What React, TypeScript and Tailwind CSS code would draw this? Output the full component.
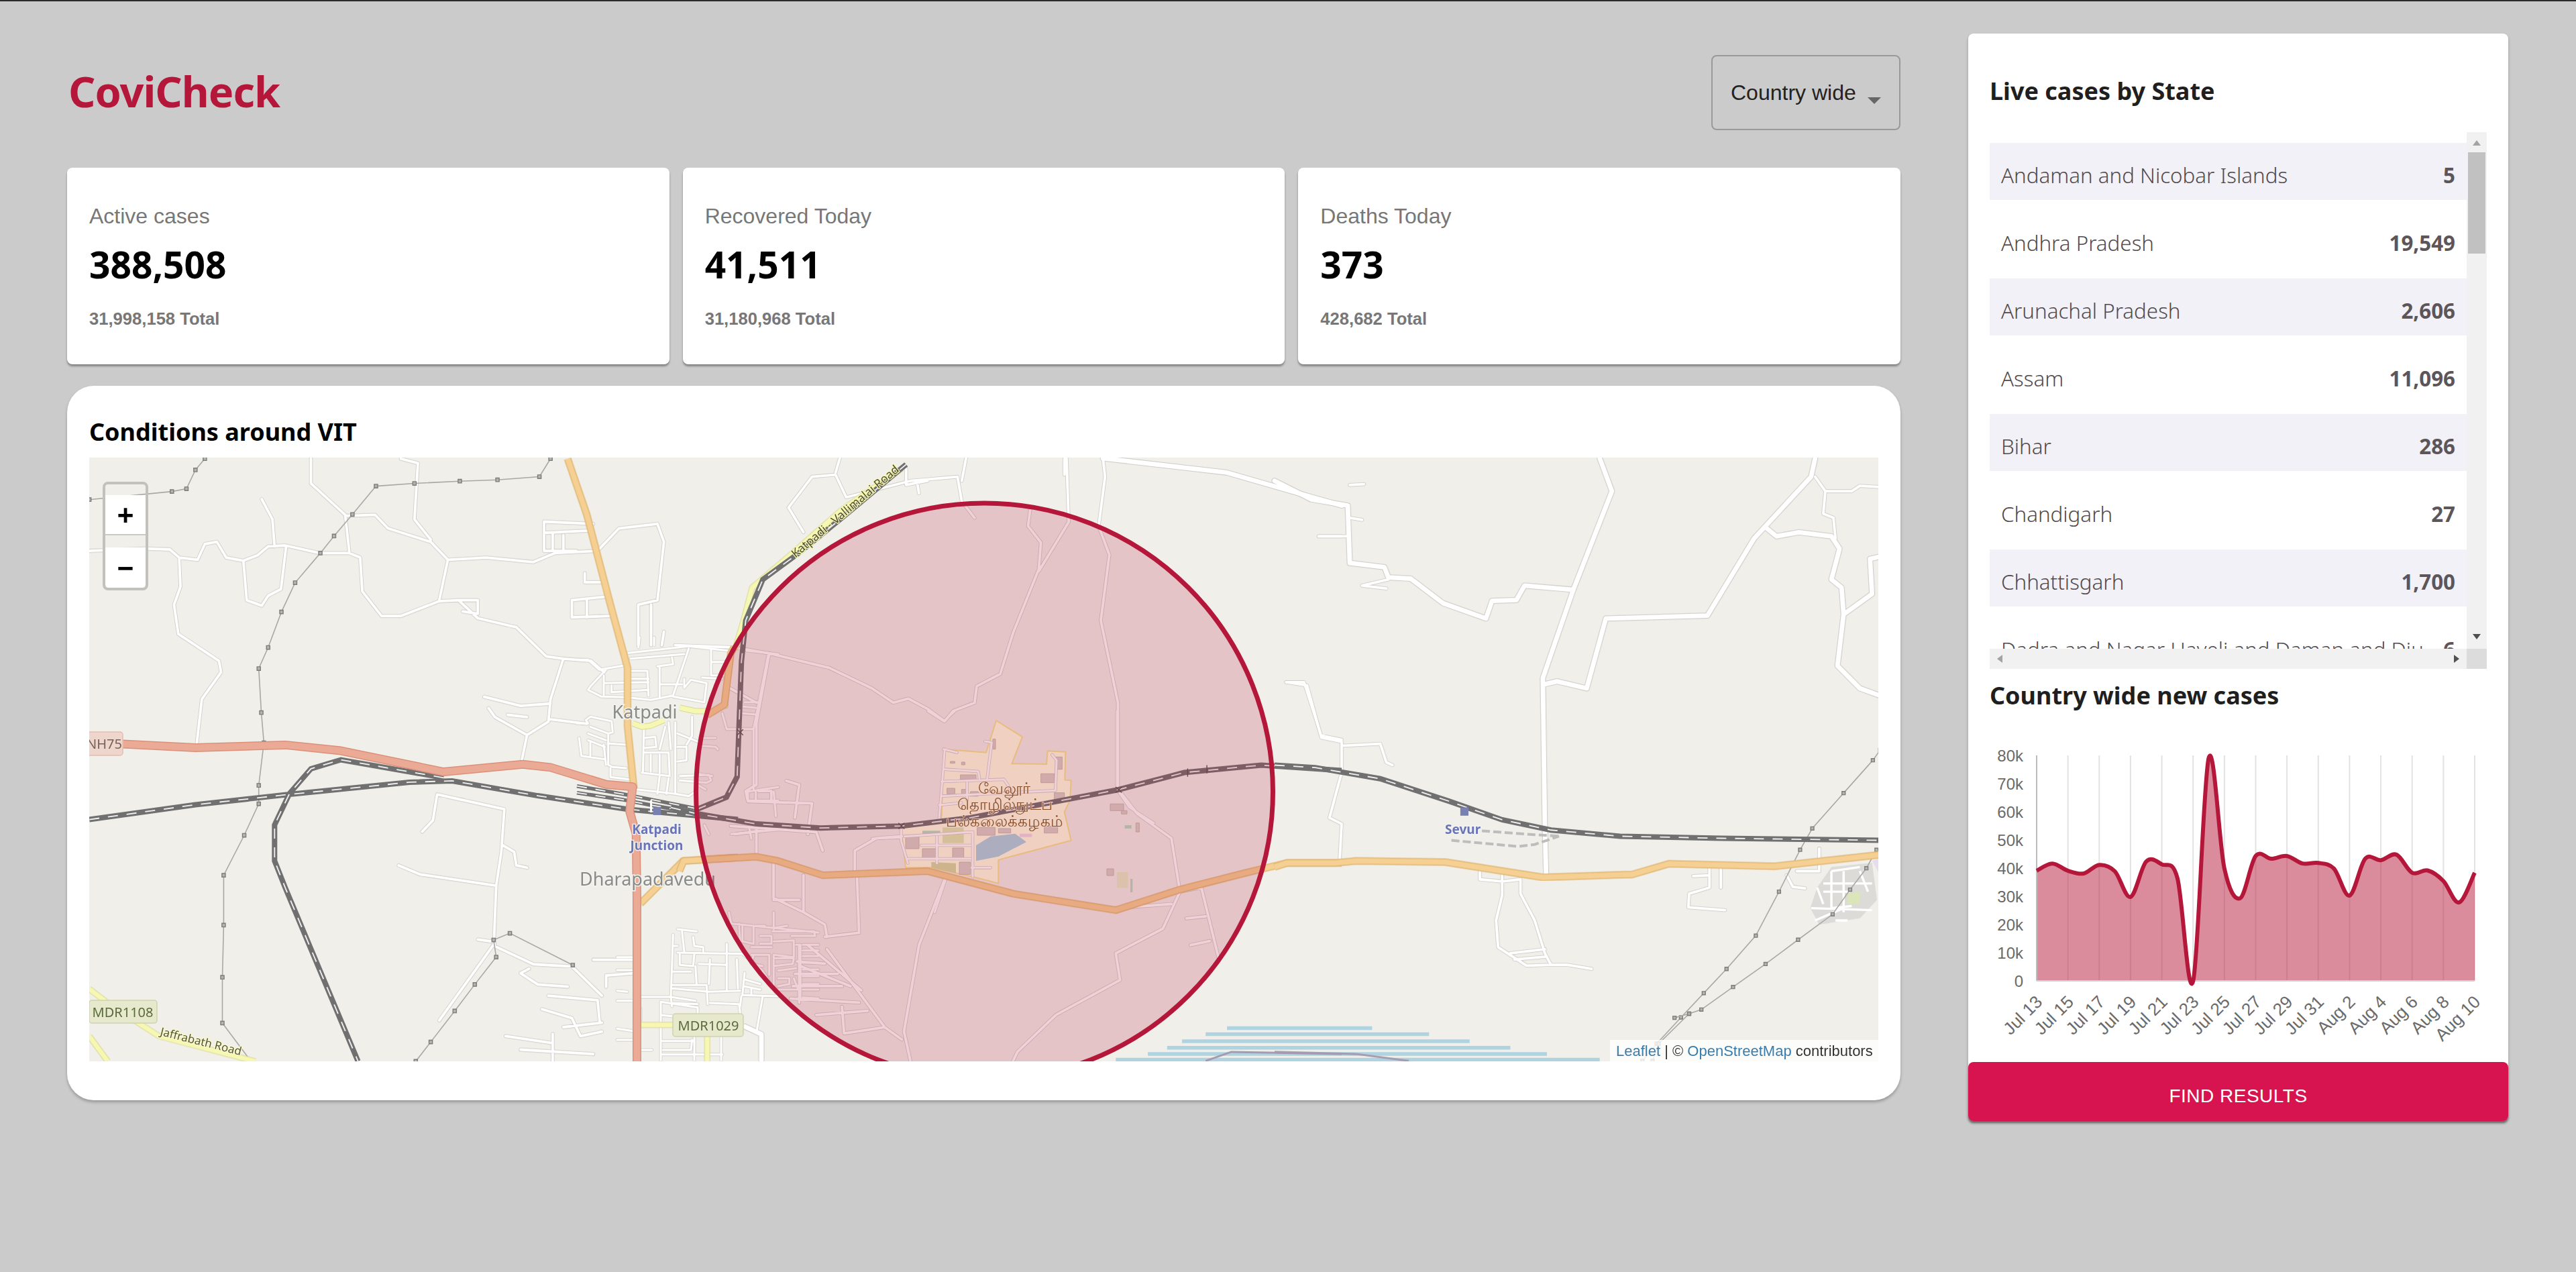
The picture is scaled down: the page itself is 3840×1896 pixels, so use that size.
import React from "react";

type Frame = { tx: number; ty: number; sx: number; sy: number; roads: string; thick?: string };
const tf = (f: { tx: number; ty: number; sx: number; sy: number }) => `translate(${f.tx} ${f.ty}) scale(${f.sx} ${f.sy})`;

const Z4 = { tx: 100, ty: 600, sx: 1 / 1.568, sy: 1 / 1.493 };
const Z5 = { tx: 1000, ty: 680, sx: 1 / 1.568, sy: 1 / 1.633 };
const Z6 = { tx: 1900, ty: 680, sx: 1 / 1.6505, sy: 1 / 1.633 };
const Z7 = { tx: 1300, ty: 1060, sx: 1 / 3, sy: 1 / 3 };
const Z9 = { tx: 860, ty: 950, sx: 1 / 3, sy: 1 / 3 };
const Z10 = { tx: 920, ty: 1360, sx: 1 / 3, sy: 1 / 3 };

const frames: Frame[] = [
  {
    ...Z4,
    roads:
      "M52 330 L180 325 L240 327 L262 345 L305 350 L322 315 L350 310 L372 345 L412 352 L445 340 L470 320 L510 318 L590 335 L660 335 L685 345 L690 420 L735 475 L780 475 L870 442 L915 440 L960 480 L1050 500 L1120 565 L1160 570 L1225 575 L1255 600 M262 345 L265 410 L250 450 L260 515 L355 575 L360 600 L315 660 L303 760 M412 352 L420 440 L455 452 L470 430 L500 415 L512 320 M455 215 L480 260 L485 320 M570 125 L570 180 L650 250 L660 335 M650 252 L720 250 L750 280 L850 310 L890 350 L870 440 M780 125 L820 135 L812 260 L850 305 M890 350 L980 345 L1090 355 L1140 335 L1240 330 L1290 280 L1380 270 L1395 310 L1380 440 L1335 450 L1335 540 M1115 265 L1230 270 M1115 265 L1115 330 L1190 330 M1135 290 L1135 330 M1160 295 L1160 330 M1115 290 L1220 285 M1210 380 L1210 400 L1255 400 M1180 440 L1260 432 M1180 440 L1180 478 L1270 475 M1215 440 L1215 478 M1365 450 L1365 540 M1395 510 L1390 540 M1160 570 L1130 660 L1125 710 L1075 740 L1062 800 M975 655 L1060 675 L1130 670 M985 680 L1000 700 L1075 740 M1130 705 L1215 715 M1030 695 L1075 700 M865 872 L1022 905 L1015 1000 L1003 1075 L998 1195 L1000 1210 L1090 1250 L1180 1255 L1250 1320 M865 872 L855 930 L830 955 M1018 985 L1045 1000 L1050 1030 L1075 1035 M775 1030 L825 1050 L1003 1075 M998 1205 L870 1375 M915 440 L960 440 L960 470 L925 465 M1080 1260 L1060 1270 L1100 1295 L1170 1300 M1125 1320 L1240 1330 L1245 1380 M1110 1350 L1180 1370 L1200 1410 L1250 1400 M1025 1410 L1130 1425 M1135 1405 L1135 1466 M1060 1440 L1230 1450 M1230 1240 L1325 1240 M1260 1275 L1325 1270 M1260 1275 L1260 1300 M960 1195 L998 1200 M1160 1390 L1250 1380",
  },
  {
    ...Z5,
    roads:
      "M840 130 L835 170 L865 210 L860 275 L800 430 L770 530 L715 560 L710 600 L660 620 L640 645 L600 615 L555 590 L520 600 L470 565 L400 530 L370 515 L230 480 L175 470 L140 465 L10 460 M925 5 L930 160 L860 280 M1010 5 L1015 50 L1000 170 L1025 240 L1005 400 L1045 600 L1045 810 L1090 870 L1170 930 L1190 1060 L1150 1150 L1040 1210 L1050 1275 L900 1360 L810 1450 L800 1472 M1190 1060 L1240 1050 L1280 1220 M1170 1090 L1040 1100 M1205 1125 L1250 1120 M1215 1190 L1260 1180 M230 480 L200 650 L200 800 L175 815 L180 840 L330 845 L320 920 M270 790 L300 800 L290 880 M205 815 L235 815 L235 840 M640 1030 L580 1190 L545 1400 L560 1472 M360 1170 L440 1160 L435 1020 M365 1200 L500 1390 L540 1420 M400 1340 L405 1405 L500 1390 M300 1240 L420 1290 M310 1110 L360 1140 L365 1170 M240 985 L240 1075 L310 1110 L310 1020 M240 1080 L300 1080 M140 900 L340 915 L355 960 M150 920 L260 905 M200 900 L200 970 M430 1020 L430 960 L480 930 L540 925 M1438 550 L1480 550 L1520 680 L1568 690 M320 1190 L445 1300 M295 1230 L360 1235 M290 1260 L390 1260 M285 1290 L400 1290 M280 1320 L440 1330 M340 1360 L460 1350 M300 1190 L300 1330 M1515 195 L1568 195 M275 125 L330 50 L385 45 L410 100 L560 60 L670 50 L680 110 L710 150 M275 125 L310 185 M680 60 L690 5 M920 5 L920 45 M395 5 L385 40 M550 30 L550 70 L600 60 M575 60 L580 90 M130 610 L130 560 L200 600",
    thick: "M1010 5 L1300 40 L1500 100 L1568 120",
  },
  {
    ...Z6,
    roads:
      "M185 70 L220 68 M185 150 L215 155 M108 195 L180 195 M215 315 L275 322 M215 315 L280 300 M30 550 L80 558 L115 685 L165 695 L165 770 L135 880 L165 895 L160 985 M165 705 L260 700 L275 745 L290 752 M505 1010 L505 1030 L560 1035 L605 1030 L605 1065 L640 1130 L665 1210 L680 1238 L720 1238 L780 1248 M560 1020 L560 1068 L545 1130 L550 1195 L620 1240 L680 1238 M580 1210 L665 1200 M590 1225 L670 1218 M1070 1000 L1070 1050 L1020 1065 L1018 1098 L1108 1105 M1098 1000 L1098 1050 M1030 1022 L1070 1020 M1340 955 L1340 1010 L1285 1010 M1260 1020 L1275 1048 L1305 1052 M1355 85 L1420 85 L1440 72 L1487 75 M1330 50 L1355 85 L1350 140 L1375 150 L1380 200",
    thick:
      "M0 60 L90 105 L180 120 L185 260 L270 270 L280 295 L335 298 L415 358 L520 395 L535 352 L595 350 L615 315 L735 325 L660 540 L665 900 L668 1015 M800 5 L830 85 L735 325 M665 555 L695 548 L768 565 L815 395 L1065 388 L1180 200 L1320 50 L1330 5 M1210 175 L1235 195 L1290 185 L1370 195 L1390 225 L1370 300 L1395 320 L1400 385 L1385 510 L1440 565 L1487 582 M1400 385 L1470 335 L1465 250 L1487 245",
  },
  {
    ...Z9,
    roads:
      "M0 100 L50 100 L100 145 L215 125 M130 145 L60 220 L50 235 L110 265 L220 268 M120 170 L120 260 M120 205 L320 200 M155 215 L155 245 L320 235 M240 150 L315 150 L320 260 M240 185 L320 185 M230 70 L500 40 L680 60 M240 95 L480 75 M500 50 L430 260 L330 280 L220 268 M360 130 L430 120 L425 90 M370 130 L370 270 M375 210 L470 210 M480 185 L480 225 L510 190 L580 205 L570 290 L430 265 M600 55 L600 170 L670 170 M600 110 L680 110 M650 185 L560 180 M280 0 L275 45 M345 0 L345 35 M385 0 L380 35 M0 385 L50 385 L40 370 L60 355 L155 375 L160 425 L140 430 L60 400 M50 430 L130 460 M50 460 L125 490 M10 450 L20 530 L125 545 M60 470 L60 530 M120 480 L130 570 M140 430 L140 570 L160 580 L220 585 M145 475 L220 480 M150 585 L150 625 L235 635 M300 400 L295 605 M300 450 L350 445 L355 490 L300 495 M300 515 L410 515 L415 620 L290 605 M330 525 L330 600 M370 525 L370 605 M395 400 L370 500 M410 380 L420 500 M440 380 L440 700 M450 490 L490 490 L490 550 L450 555 M450 430 L550 470 M515 355 L515 440 L490 480 M555 450 L620 450 M555 485 L620 490 L630 500 M460 620 L590 615 L600 640 L580 650 L460 640 M370 620 L360 700 M410 630 L400 700 M270 680 L440 700 L500 710 L530 690 M650 340 L670 410 L790 410 M750 290 L810 290 M745 310 L800 315 M740 340 L800 345 M855 80 L790 410 L790 680 M760 60 L900 75 M760 690 L900 670 M765 690 L765 730 L900 730 M800 690 L800 730 M880 690 L890 800 M540 610 L605 620 M540 660 L575 680 M570 840 L590 880 M690 880 L900 860 M770 850 L780 900",
  },
  {
    ...Z10,
    roads:
      "M250 100 L240 380 L245 420 M270 75 L355 85 M290 85 L300 175 M255 150 L270 150 M340 110 L345 150 L385 155 L385 175 M270 180 L560 185 L650 260 L720 375 M280 185 L280 235 L340 240 L345 185 M245 265 L330 265 M245 325 L400 325 L405 410 M350 240 L355 320 M415 210 L410 320 M365 230 L490 235 M490 140 L490 350 M535 210 L540 340 M570 270 L560 370 L720 375 M570 300 L640 320 M565 330 L640 345 M600 340 L600 370 M245 340 L410 355 L550 350 M100 378 L240 378 L350 395 M245 405 L360 410 M195 400 L195 660 M195 400 L360 425 L360 450 M415 405 L545 410 L550 450 M555 375 L550 420 M650 380 L625 525 M0 200 L70 200 M0 258 L70 258 M0 350 L45 355 M0 395 L70 395 M0 520 L70 530 M105 430 L105 480 M0 570 L70 570 M110 615 L155 615 M200 460 L255 465 M200 575 L340 575 M205 615 L330 615 L335 570 M195 635 L470 635 M465 555 L465 660 M345 555 L345 660 M500 0 L510 50 L900 90 M545 50 L550 130 M560 55 L560 130 L610 140 L610 60 L660 60 M640 105 L690 105 L690 140 L640 140 M600 155 L690 155 M700 0 L700 75 M700 70 L760 60 M700 130 L790 125 L790 200 L700 190 L700 340 M695 85 L880 85 L885 105 L780 105 M800 145 L820 145 L820 390 M830 145 L900 145 M830 170 L900 170 M830 195 L900 195 M830 225 L900 225 M830 255 L900 255 M830 285 L900 285 M830 320 L900 320 M830 345 L900 345 M830 380 L900 385 M600 190 L680 190 L680 280 M610 190 L600 230 L650 240 M700 205 L790 205 L785 230 L700 240 M720 260 L800 250 M720 295 L770 295 L770 320 L720 330 M790 295 L810 345 L720 345",
    thick: "M570 510 L645 545 L645 660",
  },
  {
    ...Z7,
    roads:
      "M320 170 L380 185 M325 170 L315 300 L300 480 M325 260 L475 270 L480 300 M310 315 L590 305 L620 350 L620 380 M310 380 L820 355 L825 220 L805 195 M505 135 L535 140 L515 300 M425 320 L425 400 M300 420 L400 410 M130 520 L130 580 L160 680 M0 570 L130 565 M145 560 L450 540 L450 740 M290 560 L290 680 M220 600 L440 600 M160 660 L440 660 M445 700 L530 700 M1095 0 L1095 350 L1150 430 L1260 500 M250 0 L320 45 L370 0 M330 750 L280 900",
  },
];

const powerLines: { f: typeof Z4; pts: number[][] }[] = [
  { f: Z4, pts: [[52, 216], [245, 198], [279, 192], [300, 150], [322, 125]] },
  { f: Z4, pts: [[1130, 125], [1104, 165], [1006, 172], [918, 175], [812, 180], [722, 186], [667, 249], [624, 297], [592, 335], [533, 401], [501, 466], [470, 545], [448, 592], [454, 690], [460, 757], [448, 852], [448, 893], [414, 963], [366, 1052], [366, 1163], [363, 1279], [363, 1381], [430, 1466]] },
  { f: Z4, pts: [[1182, 1252], [1035, 1181], [997, 1196], [1003, 1234], [953, 1295], [906, 1354], [850, 1423], [815, 1466]] },
  { f: Z6, pts: [[1490, 715], [1472, 740], [1400, 820], [1323, 906], [1293, 958], [1241, 1060], [1184, 1167], [1112, 1248], [1056, 1307], [1000, 1366], [940, 1430], [905, 1472]] },
  { f: Z6, pts: [[1481, 958], [1456, 1003], [1416, 1055], [1373, 1115], [1288, 1177], [1208, 1236], [1128, 1292], [1050, 1347], [1020, 1357], [984, 1367]] },
  { f: Z6, pts: [[1020, 1357], [945, 1430], [930, 1472]] },
];

const buildings: number[][] = [
  [755, 280, 60, 40], [820, 205, 30, 55], [815, 365, 45, 40], [395, 285, 70, 20], [335, 345, 35, 25], [400, 350, 25, 20], [440, 360, 35, 20], [470, 520, 80, 35], [565, 525, 55, 20], [150, 555, 60, 60], [225, 615, 65, 40], [360, 612, 50, 46], [390, 675, 50, 55], [1065, 415, 60, 30], [1050, 705, 30, 30], [1180, 500, 15, 40], [540, 125, 12, 45], [350, 225, 20, 8], [400, 228, 15, 12], [770, 515, 60, 30], [1115, 445, 25, 15],
];

const stateRows: [string, string][] = [
  ["Andaman and Nicobar Islands", "5"],
  ["Andhra Pradesh", "19,549"],
  ["Arunachal Pradesh", "2,606"],
  ["Assam", "11,096"],
  ["Bihar", "286"],
  ["Chandigarh", "27"],
  ["Chhattisgarh", "1,700"],
  ["Dadra and Nagar Haveli and Daman and Diu", "6"],
];

const chartY = [598, 572, 598, 608, 577, 600, 692, 565, 575, 625, 995, 192, 590, 697, 545, 555, 545, 572, 570, 590, 687, 555, 560, 540, 605, 597, 635, 712, 605];
const px = (i: number) => 3036 + (i * 653) / 28;
const py = (y: number) => 1050 + y / 2.412;
const pts = chartY.map((y, i) => [px(i), py(y)]);
const linePath = pts.reduce((acc, p, i) => {
  if (i === 0) return `M${p[0]} ${p[1]}`;
  const p0 = pts[Math.max(i - 2, 0)];
  const p1 = pts[i - 1];
  const p3 = pts[Math.min(i + 1, pts.length - 1)];
  const c1x = p1[0] + (p[0] - p0[0]) / 6;
  const c1y = p1[1] + (p[1] - p0[1]) / 6;
  const c2x = p[0] - (p3[0] - p1[0]) / 6;
  const c2y = p[1] - (p3[1] - p1[1]) / 6;
  return `${acc} C${c1x} ${c1y} ${c2x} ${c2y} ${p[0]} ${p[1]}`;
}, "");
const xLabels = ["Jul 13", "Jul 15", "Jul 17", "Jul 19", "Jul 21", "Jul 23", "Jul 25", "Jul 27", "Jul 29", "Jul 31", "Aug 2", "Aug 4", "Aug 6", "Aug 8", "Aug 10"];
const yLabels = ["0", "10k", "20k", "30k", "40k", "50k", "60k", "70k", "80k"];

function MapArt() {
  const ns = { vectorEffect: "non-scaling-stroke" as const, fill: "none" };
  return (
    <svg viewBox="133 682 2667 900" className="block w-[2667px] h-[900px]">
      <defs>
        <filter id="soft" x="0" y="0" width="1" height="1">
          <feGaussianBlur stdDeviation="0.6" />
        </filter>
      </defs>
      <rect x="133" y="682" width="2667" height="900" fill="#f0efe9" />
      <g filter="url(#soft)">
        <g transform={tf(Z6)} stroke="#afd3e0" strokeWidth="5.5" fill="none">
          {[[1392, 240], [1407, 380], [1424, 480], [1440, 580], [1455, 670], [1469, 800]].map(([y, x]) => (
            <path key={y} d={`M-400 ${y} L${x} ${y}`} vectorEffect="non-scaling-stroke" />
          ))}
        </g>
        <g transform={tf(Z5)} stroke="#f0efe9" fill="none">
          <path d="M1000 1392 L1300 1392" vectorEffect="non-scaling-stroke" strokeWidth="8" />
          <path d="M1000 1407 L1250 1407" vectorEffect="non-scaling-stroke" strokeWidth="8" />
          <path d="M1000 1424 L1195 1424" vectorEffect="non-scaling-stroke" strokeWidth="8" />
          <path d="M1000 1440 L1160 1440" vectorEffect="non-scaling-stroke" strokeWidth="8" />
          <path d="M1000 1455 L1115 1455" vectorEffect="non-scaling-stroke" strokeWidth="8" />
          <path d="M1000 1469 L1040 1469" vectorEffect="non-scaling-stroke" strokeWidth="8" />
          <path d="M1250 1472 L1310 1450 L1568 1455" stroke="#a59ab0" strokeWidth="3" vectorEffect="non-scaling-stroke" />
        </g>
        <g transform={tf(Z6)}>
          <path d="M0 1450 L200 1455 L330 1472" stroke="#a59ab0" strokeWidth="3" {...ns} />
          <path d="M1335 1050 L1370 1000 L1470 990 L1482 1080 L1440 1125 L1340 1140 L1318 1100 Z" fill="#dcdbd7" stroke="none" />
          <path d="M1470 985 L1487 980 L1487 1015 Z" fill="#e6dced" stroke="none" />
          <path d="M1410 1065 L1440 1060 L1440 1090 L1410 1090 Z" fill="#dbe6b8" stroke="none" />
        </g>
        <g transform={tf(Z7)}>
          <path d="M555 42 L672 115 L625 235 L780 237 L785 178 L865 182 L862 308 L890 310 L885 400 L860 450 L890 578 L565 665 L565 770 L450 740 L265 700 L150 700 L130 520 L310 490 L320 170 L510 185 Z" fill="#ffffe3" stroke="#f6e48f" strokeWidth="2" vectorEffect="non-scaling-stroke" />
          <path d="M465 600 L530 560 L640 548 L690 585 L565 650 L465 670 Z" fill="#aad3df" />
          <path d="M265 675 L375 680 L375 725 L265 700 Z" fill="#d4dba0" />
          <rect x="315" y="520" width="95" height="70" fill="#dce9b0" />
          <rect x="1095" y="720" width="50" height="70" fill="#e8edc7" />
          <rect x="1155" y="750" width="10" height="60" fill="#b4dcc0" />
          <rect x="225" y="535" width="80" height="20" fill="#b4dcc0" />
          <rect x="1130" y="510" width="30" height="15" fill="#b4dcc0" />
          <rect x="660" y="548" width="55" height="15" fill="#f0d9e8" />
          {buildings.map(([x, y, w, h], i) => (
            <rect key={i} x={x} y={y} width={w} height={h} fill="#d9d0c9" stroke="#c5b8ae" strokeWidth="1" vectorEffect="non-scaling-stroke" />
          ))}
        </g>
        {frames.map((f, i) => (
          <g key={i} transform={tf(f)}>
            <path d={f.roads} stroke="#cfcec9" strokeWidth={i < 3 ? 5.6 : 4.6} strokeLinejoin="round" strokeLinecap="round" {...ns} />
            {f.thick && <path d={f.thick} stroke="#cfcec9" strokeWidth="9" strokeLinejoin="round" strokeLinecap="round" {...ns} />}
          </g>
        ))}
        {frames.map((f, i) => (
          <g key={i} transform={tf(f)}>
            <path d={f.roads} stroke="#ffffff" strokeWidth={i < 3 ? 3.8 : 3} strokeLinejoin="round" strokeLinecap="round" {...ns} />
            {f.thick && <path d={f.thick} stroke="#ffffff" strokeWidth="6.8" strokeLinejoin="round" strokeLinecap="round" {...ns} />}
          </g>
        ))}
        <g transform={tf(Z6)}>
          <path d="M1350 1040 L1470 1040 M1370 1010 L1370 1100 L1420 1095 M1400 1010 L1400 1110 M1320 1100 L1470 1105 M1330 1130 L1400 1100 M1440 1010 L1460 1060 M1350 1060 L1415 1060 M1380 1130 L1410 1130 M1335 1050 L1350 1090 M1370 1010 L1440 1000" stroke="#ffffff" strokeWidth="3.4" strokeLinejoin="round" {...ns} />
        </g>
        {powerLines.map((l, i) => (
          <g key={i} transform={tf(l.f)}>
            <path d={"M" + l.pts.map((p) => p.join(" ")).join(" L")} stroke="#a9a8a4" strokeWidth="1.6" {...ns} />
            {l.pts.map((p, j) => (
              <rect key={j} x={p[0] - 4} y={p[1] - 4} width="8" height="8" fill="#b5b4b0" stroke="#7c7c78" strokeWidth="1.4" vectorEffect="non-scaling-stroke" />
            ))}
          </g>
        ))}
        {[
          { f: Z4, d: "M52 1305 L100 1340 L215 1410 L440 1466 M52 1410 L95 1466 M1340 1385 L1420 1385" },
          { f: Z9, d: "M250 385 L290 400 L330 395 L390 370 M460 315 L530 330 L580 330" },
          { f: Z5, d: "M540 30 L400 130 L280 240 L190 320 L170 400 L150 470 M85 1480 L85 1400" },
        ].map((s, i) => (
          <g key={i} transform={tf(s.f)}>
            <path d={s.d} stroke="#d8d896" strokeWidth="9" {...ns} strokeLinejoin="round" />
            <path d={s.d} stroke="#f7f7b4" strokeWidth="7" {...ns} strokeLinejoin="round" />
          </g>
        ))}
        {[
          { f: Z4, d: "M52 928 L300 895 L520 872 L800 845 L900 842 L1100 875 L1310 905 L1568 928 M880 835 L640 795 L570 815 L520 870 L485 940 L485 1020 L510 1080 L680 1466", w: 8 },
          { f: Z9, d: "M0 665 L200 700 L330 725 L530 765 M0 695 L200 725 L330 750 L530 785", w: 5.5 },
          { f: Z5, d: "M0 855 L60 870 L200 895 L350 905 L540 900 L700 880 L1045 812 L1200 770 L1380 752 L1568 765 M60 860 L130 830 L155 780 L165 500 L175 400 L215 300 L300 235 L400 150 L550 20", w: 8 },
          { f: Z6, d: "M0 752 L100 758 L260 785 L430 840 L560 885 L680 910 L850 925 L1100 930 L1490 935", w: 8 },
        ].map((r, i) => (
          <g key={i} transform={tf(r.f)}>
            <path d={r.d} stroke="#707070" strokeWidth={r.w} {...ns} />
            <path d={r.d} stroke="#f2f2f2" strokeWidth="1.8" strokeDasharray="15 13" {...ns} />
          </g>
        ))}
        <g transform={tf(Z6)}>
          <path d="M510 912 L620 920 L700 925 M435 935 L600 950 L640 945 L700 925" stroke="#bdbdbd" strokeWidth="4" strokeDasharray="12 5" {...ns} />
          <rect x="457" y="855" width="20" height="20" fill="#7981b1" />
        </g>
        <g transform={tf(Z5)} stroke="#5a4f50" strokeWidth="1.4" fill="none">
          <path d="M532 893 L546 907 M546 893 L532 907 M1040 805 L1054 819 M1054 805 L1040 819 M155 665 L169 679 M169 665 L155 679 M1208 760 L1208 780 M1253 752 L1253 772" vectorEffect="non-scaling-stroke" />
        </g>
        {[
          { f: Z4, d: "M1170 125 L1215 250 L1270 450 L1310 590 L1310 720 L1325 860 M1340 1115 L1440 1020 L1568 1012" },
          { f: Z5, d: "M20 1010 L30 985 L200 975 L250 985 L355 1020 L600 1010 L800 1065 L1040 1105 L1190 1055 L1340 1015 L1440 990 L1568 990 M85 630 L125 605 L140 480 L148 465" },
          { f: Z6, d: "M0 1000 L30 990 L150 990 L200 985 L420 988 L660 1025 L880 1018 L970 992 L1230 998 L1490 970" },
        ].map((r, i) => (
          <g key={i} transform={tf(r.f)}>
            <path d={r.d} stroke="#dfb673" strokeWidth="11" strokeLinejoin="round" {...ns} />
            <path d={r.d} stroke="#f6cf92" strokeWidth="8" strokeLinejoin="round" {...ns} />
          </g>
        ))}
        <g transform={tf(Z4)}>
          <path d="M130 760 L300 768 L510 762 L640 775 L880 822 L1065 805 L1130 812 L1260 850 L1322 855 L1315 910 L1330 960 L1332 1100 L1332 1466" stroke="#dc9079" strokeWidth="13" strokeLinejoin="round" {...ns} />
          <path d="M130 760 L300 768 L510 762 L640 775 L880 822 L1065 805 L1130 812 L1260 850 L1322 855 L1315 910 L1330 960 L1332 1100 L1332 1466" stroke="#ebaa96" strokeWidth="10" strokeLinejoin="round" {...ns} />
          <rect x="1370" y="900" width="18" height="18" fill="#7981b1" />
          <path d="M1365 885 L1365 912" stroke="#fff" strokeWidth="3" {...ns} />
        </g>
        <g fontFamily="'Noto Sans', sans-serif">
          <rect x="120" y="1091" width="63" height="35" rx="4" fill="#efd6cc" stroke="#e3bdae" strokeWidth="1.5" />
          <text x="129" y="1116" fontSize="20" fill="#75625a">NH75</text>
          <rect x="133" y="1491" width="101" height="34" rx="4" fill="#e7e9cd" stroke="#cfd2ae" strokeWidth="1.5" />
          <text x="183" y="1516" fontSize="20" fill="#5a6a3c" textAnchor="middle">MDR1108</text>
          <rect x="1003" y="1511" width="105" height="34" rx="4" fill="#e7e9cd" stroke="#cfd2ae" strokeWidth="1.5" />
          <text x="1056" y="1536" fontSize="20" fill="#5a6a3c" textAnchor="middle">MDR1029</text>
          <text x="961" y="1071" fontSize="27" fill="#8a8a88" stroke="#f3f3ef" strokeWidth="3" paintOrder="stroke" textAnchor="middle">Katpadi</text>
          <text x="864" y="1320" fontSize="27" fill="#8a8a88" stroke="#f3f3ef" strokeWidth="3" paintOrder="stroke">Dharapadavedu</text>
          <text x="979" y="1243" fontSize="19" fontWeight="700" fill="#6b74b8" stroke="#f3f3ef" strokeWidth="2.5" paintOrder="stroke" textAnchor="middle">Katpadi</text>
          <text x="979" y="1267" fontSize="19" fontWeight="700" fill="#6b74b8" stroke="#f3f3ef" strokeWidth="2.5" paintOrder="stroke" textAnchor="middle">Junction</text>
          <text x="2154" y="1243" fontSize="19" fontWeight="700" fill="#6b74b8" stroke="#f3f3ef" strokeWidth="2.5" paintOrder="stroke">Sevur</text>
          <text transform="translate(238 1543) rotate(14)" fontSize="17" fill="#55553c" stroke="#fafac8" strokeWidth="2.5" paintOrder="stroke">Jaffrabath Road</text>
          <text transform="translate(1186 832) rotate(-40)" fontSize="17.5" fill="#4c4c30" stroke="#f7f7b4" strokeWidth="2.5" paintOrder="stroke">Katpadi - Vallimalai Road</text>
          <g fontSize="23" fill="#7c5c28" stroke="#ffffe3" strokeWidth="1.5" paintOrder="stroke" textAnchor="middle">
            <text x="1497" y="1183">வேலூர்</text>
            <text x="1498" y="1207">தொழில்நுட்ப</text>
            <text x="1497" y="1232">பல்கலைக்கழகம்</text>
          </g>
        </g>
      </g>
      <circle cx="1467.5" cy="1180" r="430" fill="#b5173a" fillOpacity="0.2" stroke="#b5173a" strokeWidth="7" />
    </svg>
  );
}

function Chart() {
  return (
    <svg viewBox="2966 1100 741 482" className="block w-[741px] h-[482px]" fontFamily="'Liberation Sans', sans-serif">
      {xLabels.map((_, i) => (
        <line key={i} x1={px(i * 2)} x2={px(i * 2)} y1="1126" y2="1462" stroke="#e2e2e2" strokeWidth="2" />
      ))}
      <path d={`${linePath} L3689 1462 L3036 1462 Z`} fill="#b5173a" fillOpacity="0.5" />
      <line x1="3036" x2="3036" y1="1126" y2="1462" stroke="#bdbdbd" strokeWidth="2" />
      <line x1="3036" x2="3689" y1="1462" y2="1462" stroke="#d0d0d0" strokeWidth="2" />
      <path d={linePath} fill="none" stroke="#b5173a" strokeWidth="6" />
      {yLabels.map((t, i) => (
        <text key={t} x="3016" y={1462 - i * 41.95 + 9} textAnchor="end" fontSize="24" fill="#6a6a6a">{t}</text>
      ))}
      {xLabels.map((t, i) => (
        <text key={t} transform={`translate(${px(i * 2) + 10} ${1495}) rotate(-45)`} textAnchor="end" fontSize="26" fill="#6a6a6a">{t}</text>
      ))}
    </svg>
  );
}

const Tri = ({ d, c }: { d: string; c: string }) => (
  <svg viewBox="0 0 12 12" className="w-[12px] h-[12px] block">
    <path d={d} fill={c} />
  </svg>
);

function StatCard({ label, value, total }: { label: string; value: string; total: string }) {
  return (
    <div className="bg-white rounded-lg shadow-[0_3px_3px_rgba(0,0,0,0.35)] h-[293px] px-[33px] pt-[52px]">
      <div className="font-['Liberation_Sans',sans-serif] text-[32px] leading-[40px] text-[#777777]">{label}</div>
      <div className="font-['Noto_Sans',sans-serif] font-bold text-[55px] leading-[60px] mt-[22px] text-black">{value}</div>
      <div className="font-['Liberation_Sans',sans-serif] font-bold text-[25.6px] leading-[30px] mt-[36px] text-[#777777]">{total}</div>
    </div>
  );
}

export default function App() {
  return (
    <div className="w-[3840px] h-[1896px] bg-[#cbcbcb] border-t-2 border-[#2b2b2b] flex pl-[100px] pt-[48px] gap-[101px] overflow-hidden">
      <div className="w-[2733px] shrink-0">
        <div className="h-[200px] flex justify-between items-start">
          <h1 className="font-['Noto_Sans',sans-serif] font-bold text-[63px] leading-[80px] mt-[46px] ml-[2px] text-[#b5173a] tracking-[-1px]">CoviCheck</h1>
          <div className="mt-[32px] w-[282px] h-[112px] border-2 border-[#999999] rounded-lg flex items-center pl-[27px] gap-[17px] font-['Liberation_Sans',sans-serif] text-[32px] text-[#222222]">
            <span>Country wide</span>
            <svg viewBox="0 0 20 10" className="w-[20px] h-[10px] mt-[24px]">
              <path d="M0 0 L20 0 L10 10 Z" fill="#666666" />
            </svg>
          </div>
        </div>
        <div className="grid grid-cols-3 gap-[20px]">
          <StatCard label="Active cases" value="388,508" total="31,998,158 Total" />
          <StatCard label="Recovered Today" value="41,511" total="31,180,968 Total" />
          <StatCard label="Deaths Today" value="373" total="428,682 Total" />
        </div>
        <div className="mt-[32px] bg-white rounded-[40px] shadow-[0_3px_4px_rgba(0,0,0,0.25)] h-[1065px] px-[33px]">
          <div className="h-[107px] pt-[30px] flex items-center font-['Noto_Sans',sans-serif] font-bold text-[36px] text-black">Conditions around VIT</div>
          <div className="relative w-[2667px] h-[900px] overflow-hidden">
            <MapArt />
            <div className="absolute left-[20px] top-[36px] w-[68px] h-[162px] border-4 border-[#c2c1bb] rounded-lg flex flex-col font-['Noto_Sans',sans-serif] text-black">
              <div className="mt-[16px] h-[60px] bg-white border-b-2 border-[#c9c9c5] flex items-center justify-center text-[44px] font-bold leading-none">+</div>
              <div className="mt-[18px] h-[60px] bg-white rounded-b-md flex items-center justify-center text-[44px] font-bold leading-none">−</div>
            </div>
            <div className="absolute right-0 bottom-0 h-[32px] w-[400px] bg-white/80 flex items-center pl-[9px] font-['Liberation_Sans',sans-serif] text-[22px] text-[#333333]">
              <span className="text-[#3a7cab]">Leaflet</span>
              <span className="whitespace-pre"> | © </span>
              <span className="text-[#3a7cab]">OpenStreetMap</span>
              <span className="whitespace-pre"> contributors</span>
            </div>
          </div>
        </div>
      </div>
      <div className="w-[805px] h-[1621px] shrink-0 bg-white rounded-lg shadow-[0_3px_4px_rgba(0,0,0,0.25)] flex flex-col">
        <div className="flex-1 pl-[32px] pr-[31px]">
          <div className="h-[147px] pt-[24px] flex items-center font-['Noto_Sans',sans-serif] font-bold text-[36px] text-[#1f1f1f]">Live cases by State</div>
          <div className="grid grid-cols-[711px_30px] grid-rows-[770px_30px] w-[741px] h-[800px]">
            <div className="overflow-hidden pt-[16px]">
              {stateRows.map(([n, v], i) => (
                <div key={n} className={`h-[84.5px] mb-[16.5px] pt-[13px] px-[17px] flex items-center justify-between font-['Noto_Sans',sans-serif] text-[31.3px] text-[#524a4c] ${i % 2 === 0 ? "bg-[#f2f1f7]" : ""}`}>
                  <span className="font-light whitespace-nowrap">{n}</span>
                  <span className="font-bold text-[#5d5557]">{v}</span>
                </div>
              ))}
            </div>
            <div className="bg-[#f1f1f1] flex flex-col items-center pt-[10px] pb-[12px]">
              <Tri d="M6 2 L12 10 L0 10 Z" c="#a3a3a3" />
              <div className="mt-[8px] w-[26px] h-[151px] bg-[#c1c1c1]" />
              <div className="mt-auto">
                <Tri d="M0 2 L12 2 L6 10 Z" c="#505050" />
              </div>
            </div>
            <div className="bg-[#f1f1f1] flex items-center justify-between pl-[9px] pr-[9px]">
              <Tri d="M2 6 L10 0 L10 12 Z" c="#a3a3a3" />
              <Tri d="M10 6 L2 0 L2 12 Z" c="#505050" />
            </div>
            <div className="bg-[#dcdcdc]" />
          </div>
          <div className="h-[103px] pb-[24px] flex items-center font-['Noto_Sans',sans-serif] font-bold text-[36px] text-[#1f1f1f]">Country wide new cases</div>
          <Chart />
        </div>
        <button className="h-[88px] w-full shrink-0 bg-[#d81450] rounded-lg shadow-[0_3px_3px_rgba(0,0,0,0.35)] pt-[14px] text-white font-['Liberation_Sans',sans-serif] text-[28px] tracking-[0.5px]">FIND RESULTS</button>
      </div>
    </div>
  );
}
